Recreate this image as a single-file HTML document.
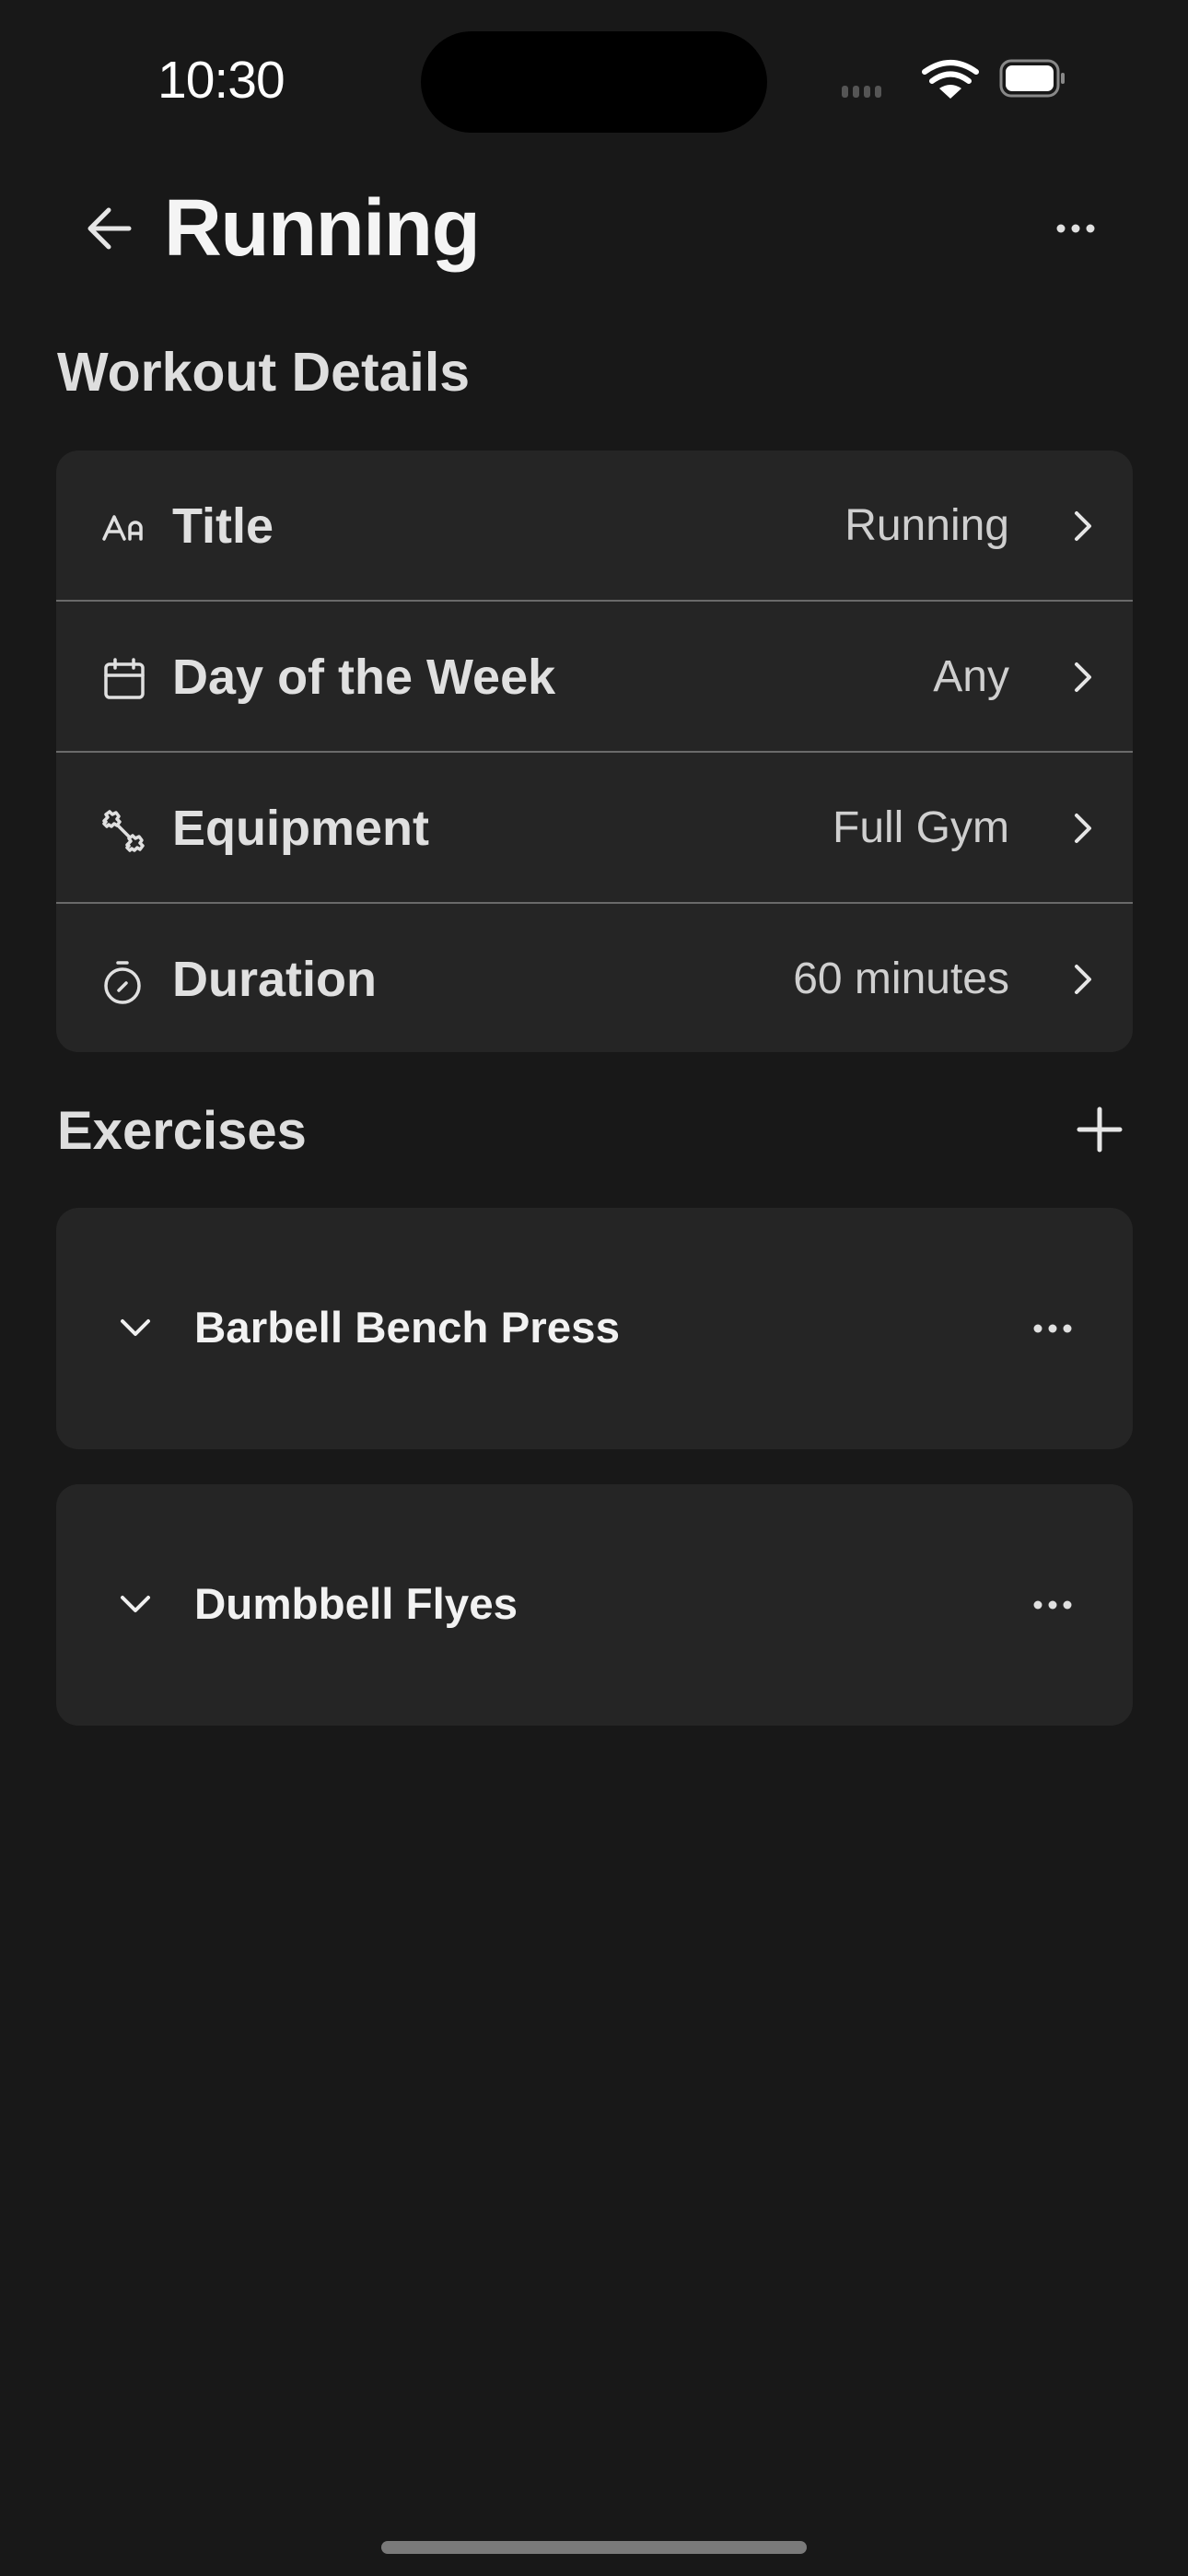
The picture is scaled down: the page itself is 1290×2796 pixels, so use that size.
<!DOCTYPE html>
<html><head><meta charset="utf-8"><style>
*{margin:0;padding:0;box-sizing:border-box}
body{width:1290px;height:2796px;background:#181818;font-family:"Liberation Sans",sans-serif;position:relative;overflow:hidden;color:#e2e2e2}
.abs{position:absolute}
.card{position:absolute;left:61px;width:1169px;background:#252525;border-radius:24px}
.row{position:absolute;left:0;width:1169px;height:164px}
.sep{position:absolute;left:0;width:1169px;height:2px;background:#6a6a6a}
.lbl{position:absolute;left:126px;top:0;line-height:164px;font-size:54px;font-weight:bold;color:#e0e0e0}
.val{position:absolute;right:134px;top:0;line-height:164px;font-size:48px;color:#cfcfcf;font-weight:300}
.chev{position:absolute;right:42px;top:64px}
.ico{position:absolute;left:48px;top:60px}
.ex{font-size:47.5px;font-weight:bold;color:#f2f2f2;position:absolute;left:150px;top:0;line-height:262px}
</style></head><body>
<div class="abs" style="left:171px;top:54px;font-size:57px;color:#fff;font-weight:500;letter-spacing:-1px">10:30</div>
<div class="abs" style="left:457px;top:34px;width:376px;height:110px;background:#000;border-radius:55px"></div>
<svg class="abs" style="left:912px;top:60px" width="270" height="50" viewBox="0 0 270 50">
<g fill="#555"><rect x="2" y="33" width="7" height="13" rx="3"/><rect x="14" y="33" width="7" height="13" rx="3"/><rect x="26" y="33" width="7" height="13" rx="3"/><rect x="38" y="33" width="7" height="13" rx="3"/></g>
<g fill="none" stroke="#fff" stroke-width="6" stroke-linecap="round"><path d="M92 18 Q120 -2 148 18"/><path d="M100 28 Q120 13 140 28"/></g>
<path d="M108 36 Q120 28 132 36 L120 47 Z" fill="#fff"/>
<rect x="175" y="6" width="62" height="38" rx="11" fill="none" stroke="#888" stroke-width="3"/>
<rect x="180" y="11" width="52" height="28" rx="7" fill="#fff"/>
<rect x="240" y="19" width="4" height="12" rx="2" fill="#888"/>
</svg>
<svg class="abs" style="left:90px;top:222px" width="56" height="52" viewBox="0 0 56 52"><path d="M50 26H8M28 6L8 26l20 20" fill="none" stroke="#e6e6e6" stroke-width="5" stroke-linecap="round" stroke-linejoin="round"/></svg>
<div class="abs" style="left:178px;top:198px;font-size:87px;font-weight:bold;color:#f4f4f4;letter-spacing:-1.5px">Running</div>
<svg class="abs" style="left:1145px;top:240px" width="48" height="16"><g fill="#e0e0e0"><circle cx="7" cy="8" r="4.5"/><circle cx="23" cy="8" r="4.5"/><circle cx="39" cy="8" r="4.5"/></g></svg>
<div class="abs" style="left:62px;top:370px;font-size:59px;font-weight:bold;color:#dedede">Workout Details</div>

<div class="card" style="top:489px;height:653px">
 <div class="row" style="top:0"><svg class="ico" width="50" height="44" viewBox="0 0 50 44"><g fill="none" stroke="#e0e0e0" stroke-width="3.5" stroke-linejoin="round" stroke-linecap="round"><path d="M4 36L15 12 26 36M8 28h14"/><path d="M32 36V24a6 6 0 0 1 12 0v12M32 30h12"/></g></svg><div class="lbl">Title</div><div class="val">Running</div><svg class="chev" width="24" height="36" viewBox="0 0 24 36"><path d="M5 4l14 14L5 32" fill="none" stroke="#e6e6e6" stroke-width="4" stroke-linecap="round" stroke-linejoin="round"/></svg></div>
 <div class="sep" style="top:162px"></div>
 <div class="row" style="top:164px"><svg class="ico" width="50" height="50" viewBox="0 0 50 50"><g fill="none" stroke="#e0e0e0" stroke-width="3.5" stroke-linecap="round"><rect x="6" y="8" width="40" height="36" rx="4"/><path d="M6 20h40M16 3v9M36 3v9"/></g></svg><div class="lbl">Day of the Week</div><div class="val">Any</div><svg class="chev" width="24" height="36" viewBox="0 0 24 36"><path d="M5 4l14 14L5 32" fill="none" stroke="#e6e6e6" stroke-width="4" stroke-linecap="round" stroke-linejoin="round"/></svg></div>
 <div class="sep" style="top:326px"></div>
 <div class="row" style="top:328px"><svg class="ico" width="52" height="52" viewBox="0 0 52 52"><g fill="none" stroke="#e0e0e0" stroke-width="3.5" stroke-linecap="round" stroke-linejoin="round"><path d="M4 14l4-4-2-3 4-3 3 3 4-2 3 4-2 3 3 3-3 4-3-2-3 3-3-2-2 2-3-3 2-2z"/><path d="M30 40l4-4-2-3 4-3 3 3 4-2 3 4-2 3 3 3-3 4-3-2-3 3-3-2-2 2-3-3 2-2z" transform="translate(-1 0)"/><path d="M19 19l12 12"/></g></svg><div class="lbl">Equipment</div><div class="val">Full Gym</div><svg class="chev" width="24" height="36" viewBox="0 0 24 36"><path d="M5 4l14 14L5 32" fill="none" stroke="#e6e6e6" stroke-width="4" stroke-linecap="round" stroke-linejoin="round"/></svg></div>
 <div class="sep" style="top:490px"></div>
 <div class="row" style="top:492px"><svg class="ico" width="50" height="50" viewBox="0 0 50 50"><g fill="none" stroke="#e0e0e0" stroke-width="3.5" stroke-linecap="round"><circle cx="24" cy="29" r="18"/><path d="M19 4h10M20 34l8-8"/></g></svg><div class="lbl">Duration</div><div class="val">60 minutes</div><svg class="chev" width="24" height="36" viewBox="0 0 24 36"><path d="M5 4l14 14L5 32" fill="none" stroke="#e6e6e6" stroke-width="4" stroke-linecap="round" stroke-linejoin="round"/></svg></div>
</div>

<div class="abs" style="left:62px;top:1194px;font-size:58px;font-weight:bold;color:#dedede">Exercises</div>
<svg class="abs" style="left:1168px;top:1200px" width="52" height="52" viewBox="0 0 52 52"><path d="M26 4v44M4 26h44" stroke="#e6e6e6" stroke-width="5" stroke-linecap="round"/></svg>

<div class="card" style="top:1311px;height:262px">
 <svg class="abs" style="left:68px;top:118px" width="36" height="24" viewBox="0 0 36 24"><path d="M4 5l14 14L32 5" fill="none" stroke="#f0f0f0" stroke-width="4" stroke-linecap="round" stroke-linejoin="round"/></svg>
 <div class="ex">Barbell Bench Press</div>
 <svg class="abs" style="left:1058px;top:123px" width="48" height="16"><g fill="#e0e0e0"><circle cx="8" cy="8" r="4.5"/><circle cx="24" cy="8" r="4.5"/><circle cx="40" cy="8" r="4.5"/></g></svg>
</div>
<div class="card" style="top:1611px;height:262px">
 <svg class="abs" style="left:68px;top:118px" width="36" height="24" viewBox="0 0 36 24"><path d="M4 5l14 14L32 5" fill="none" stroke="#f0f0f0" stroke-width="4" stroke-linecap="round" stroke-linejoin="round"/></svg>
 <div class="ex">Dumbbell Flyes</div>
 <svg class="abs" style="left:1058px;top:123px" width="48" height="16"><g fill="#e0e0e0"><circle cx="8" cy="8" r="4.5"/><circle cx="24" cy="8" r="4.5"/><circle cx="40" cy="8" r="4.5"/></g></svg>
</div>

<div class="abs" style="left:414px;top:2758px;width:462px;height:14px;border-radius:7px;background:#7a7a7a"></div>
</body></html>
